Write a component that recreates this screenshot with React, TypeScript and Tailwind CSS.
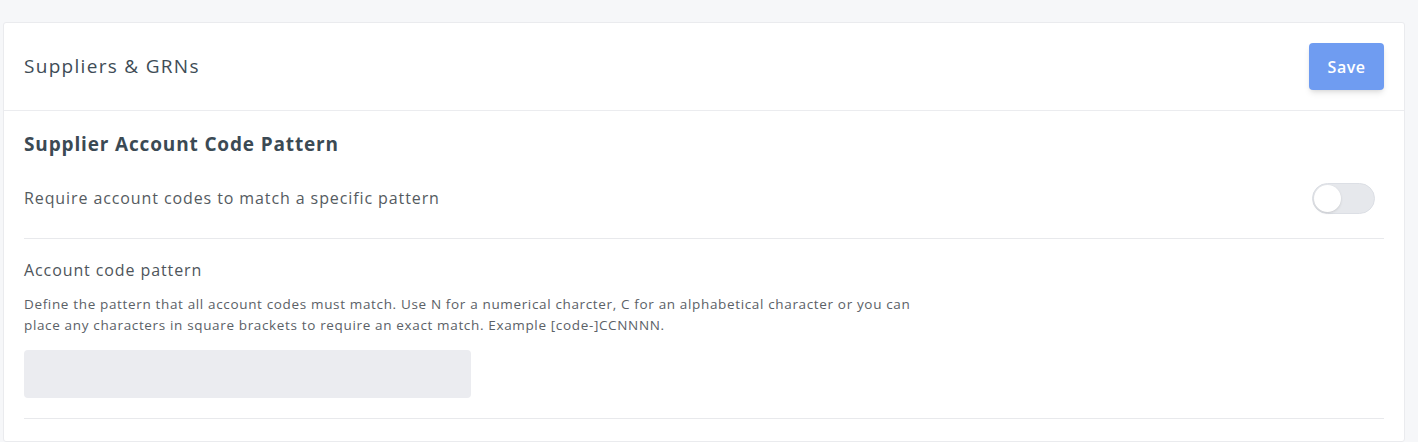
import React, { useState } from 'react';

const font = { fontFamily: '"Open Sans", "Liberation Sans", sans-serif' };

const Toggle: React.FC<{ on: boolean; onChange: (v: boolean) => void }> = ({ on, onChange }) => (
  <button
    type="button"
    onClick={() => onChange(!on)}
    className={`relative block w-[63px] h-[31px] rounded-full border border-[#dcdfe5] ${on ? 'bg-[#6e9cf2]' : 'bg-[#e6e8ec]'}`}
  >
    <span
      className={`absolute top-[1px] h-[27px] w-[27px] rounded-full bg-white shadow-sm ${on ? 'left-[33px]' : 'left-[1px]'}`}
    />
  </button>
);

export default function App() {
  const [requirePattern, setRequirePattern] = useState(false);
  const [pattern, setPattern] = useState('');

  return (
    <div className="min-h-[442px] bg-[#f6f7f9] pt-[22px] pl-[3px] pr-[13px]" style={font}>
      <div className="bg-white border border-[#eaebee] rounded-[3px] h-[420px]">
        <div className="flex items-center justify-between h-[88px] px-[20px] border-b border-[#ebecef]">
          <h1 className="text-[19px] tracking-[1.3px] text-[#3e4c56]">Suppliers &amp; GRNs</h1>
          <button
            type="button"
            className="w-[75px] h-[47px] rounded-[4px] bg-[#6f9cf1] text-white text-[16px] font-semibold tracking-[0.5px] shadow-md"
          >
            Save
          </button>
        </div>

        <div className="px-[20px] pt-[20px]">
          <h2 className="text-[19px] font-bold tracking-[0.85px] text-[#3b4a54] leading-[26px]">
            Supplier Account Code Pattern
          </h2>

          <div className="flex items-center justify-between mt-[26px] pb-[24px] border-b border-[#e8e9ec]">
            <span className="text-[16px] tracking-[0.9px] text-[#555b61] -translate-y-px">
              Require account codes to match a specific pattern
            </span>
            <div className="flex mr-[9px]">
              <Toggle on={requirePattern} onChange={setRequirePattern} />
            </div>
          </div>

          <div className="pt-[19px] pb-[20px] border-b border-[#e8e9ec]">
            <label className="block text-[16px] tracking-[0.9px] text-[#4e555b] leading-[24px]">Account code pattern</label>
            <p className="mt-[12px] text-[13.5px] tracking-[0.65px] leading-[21px] text-[#5b6167] max-w-[900px]">
              Define the pattern that all account codes must match. Use N for a numerical charcter, C for an alphabetical
              character or you can place any characters in square brackets to require an exact match. Example
              [code-]CCNNNN.
            </p>
            <input
              value={pattern}
              onChange={(e) => setPattern(e.target.value)}
              className="mt-[14px] block w-[447px] h-[48px] rounded-[4px] bg-[#ebecf0] px-3 text-[14px] outline-none"
            />
          </div>
        </div>
      </div>
    </div>
  );
}
